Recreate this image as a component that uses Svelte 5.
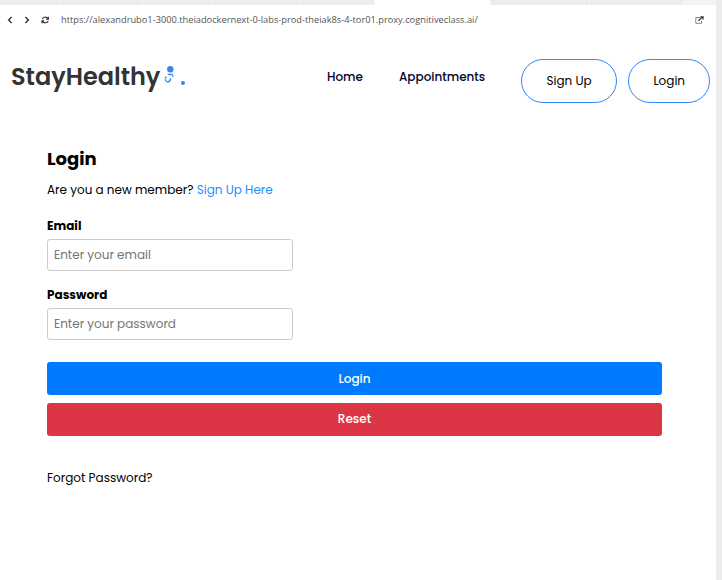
<script>
  const tabs = [
    { width: 61, active: false },
    { width: 82, active: false },
    { width: 70, active: false },
    { width: 87, active: false },
    { width: 75, active: false },
    { width: 116, active: true },
    { width: 99, active: false },
    { width: 94, active: false }
  ];
</script>

<div class="frame">
  <div class="tabs">
    {#each tabs as tab}
      <span class="tab" class:active={tab.active} style="width: {tab.width}px"></span>
    {/each}
  </div>

  <div class="toolbar">
    <svg class="back" viewBox="0 0 6 8"><path d="M4.6 1 1.6 4l3 3" /></svg>
    <svg class="forward" viewBox="0 0 6 8"><path d="m1.4 1 3 3-3 3" /></svg>
    <svg class="reload" viewBox="0 0 9 8">
      <path d="M1.2 3.2C1.8.8 5.6.4 7 2.6M7.4.8v2.3H5.2M7.2 4.8C6.6 7.2 2.8 7.6 1.4 5.4M1 7.2V4.9h2.2" />
    </svg>
    <span class="url">https://alexandrubo1-3000.theiadockernext-0-labs-prod-theiak8s-4-tor01.proxy.cognitiveclass.ai/</span>
    <svg class="open" viewBox="0 0 9 8">
      <path class="box" d="M5 1.5H.8v5.8h5.7V4.6" />
      <path d="M3.4 4.8 7.2 1.4M5.4.8h2.7v2.6" />
    </svg>
  </div>

  <header>
    <a class="logo" href="#home">
      <span>StayHealthy</span>
      <svg viewBox="0 0 12 20">
        <circle cx="6.3" cy="3.3" r="3.2" />
        <path d="M3.6 7.3q2.8 1 5.2 0v1q-2.6 2.2-5.2 0z" />
        <path class="line" d="M8.8 8.8v2M.8 11.5h2M1.3 13c.4 4.4 5 3.8 5.2-.8" />
      </svg>
      <span class="dot"></span>
    </a>
    <nav>
      <a class="link" href="#home">Home</a>
      <a class="link" href="#appointments">Appointments</a>
      <button class="pill signup">Sign Up</button>
      <button class="pill login">Login</button>
    </nav>
  </header>

  <main>
    <h1>Login</h1>
    <p class="member">Are you a new member? <a href="#signup">Sign Up Here</a></p>
    <form>
      <label for="email">Email</label>
      <input id="email" type="email" placeholder="Enter your email" />
      <label for="password">Password</label>
      <input id="password" type="password" placeholder="Enter your password" />
      <button type="button" class="submit">Login</button>
      <button type="button" class="reset">Reset</button>
    </form>
    <p class="forgot">Forgot Password?</p>
  </main>
</div>

<style>
  :global(body) { background: #fff; }
  .frame {
    box-sizing: border-box;
    width: 722px;
    height: 580px;
    overflow: hidden;
    border-right: 6px solid #ececec;
    background: #fff;
    color: #000;
    font: 12px/20px Poppins, Inter, sans-serif;
  }
  .tabs { display: flex; height: 5px; background: #f3f3f3; }
  .tab { box-sizing: border-box; flex: none; background: #ececec; border-right: 1px solid #f6f6f6; }
  .tab.active { background: #fff; }
  .toolbar { display: flex; align-items: center; height: 30px; padding: 0 12px 0 7px; }
  svg { display: block; flex: none; fill: none; stroke: #333; stroke-width: 1.4; }
  .back, .forward { width: 6px; height: 8px; }
  .forward { margin-left: 11px; }
  .reload { width: 9px; height: 8px; margin-left: 11px; stroke-width: 1.1; }
  .url { margin-left: 11px; font: 9.28px/14px "Open Sans", sans-serif; color: #555; white-space: nowrap; }
  .open { width: 9px; height: 8px; margin-left: auto; stroke-width: 1.2; }
  .open .box { stroke: #888; stroke-width: 1; }
  header { display: flex; align-items: flex-start; height: 113px; padding: 24px 5px 0 11px; box-sizing: border-box; }
  a { color: inherit; text-decoration: none; }
  .logo { display: flex; flex: none; width: 316px; height: 36px; font-size: 24px; line-height: 36px; font-weight: 600; color: #333; }
  .logo svg { width: 12px; height: 20px; margin: 7px 0 0 4px; fill: #3685fb; stroke: none; }
  .logo .line { fill: none; stroke: #3685fb; stroke-width: 1.3; }
  .dot { width: 4px; height: 4px; margin: 22px 0 0 5px; border-radius: 50%; background: #3685fb; }
  nav { display: flex; flex: none; }
  .link { margin: 8px 36px 0 0; color: #02042a; font-weight: 500; white-space: nowrap; }
  button { font: inherit; cursor: pointer; }
  .pill { box-sizing: border-box; flex: none; height: 44px; border: 1px solid #3685fb; border-radius: 22px; background: #fff; color: #000; padding: 0; }
  .signup { width: 95.5px; margin-right: 11.5px; }
  .login { width: 82px; }
  main { padding: 0 54px 0 47px; }
  h1 { margin: 0; font-size: 18px; line-height: 22px; font-weight: 700; }
  p { margin: 0; }
  .member { margin-top: 10px; }
  .member a { color: #1e90ff; }
  form { display: flex; flex-direction: column; margin-top: 16px; }
  label { font-weight: 700; }
  input { box-sizing: border-box; width: 246px; height: 32px; margin: 3px 0 14px; padding: 0 6px; border: 1px solid #ccc; border-radius: 3px; font: inherit; }
  input::placeholder { color: #757575; }
  .submit, .reset { height: 33px; border: 0; border-radius: 3px; color: #fff; font-weight: 500; }
  .submit { background: #007bff; margin-top: 8px; }
  .reset { background: #dc3545; margin-top: 8px; padding-bottom: 2px; }
  .forgot { margin-top: 32px; }
</style>
